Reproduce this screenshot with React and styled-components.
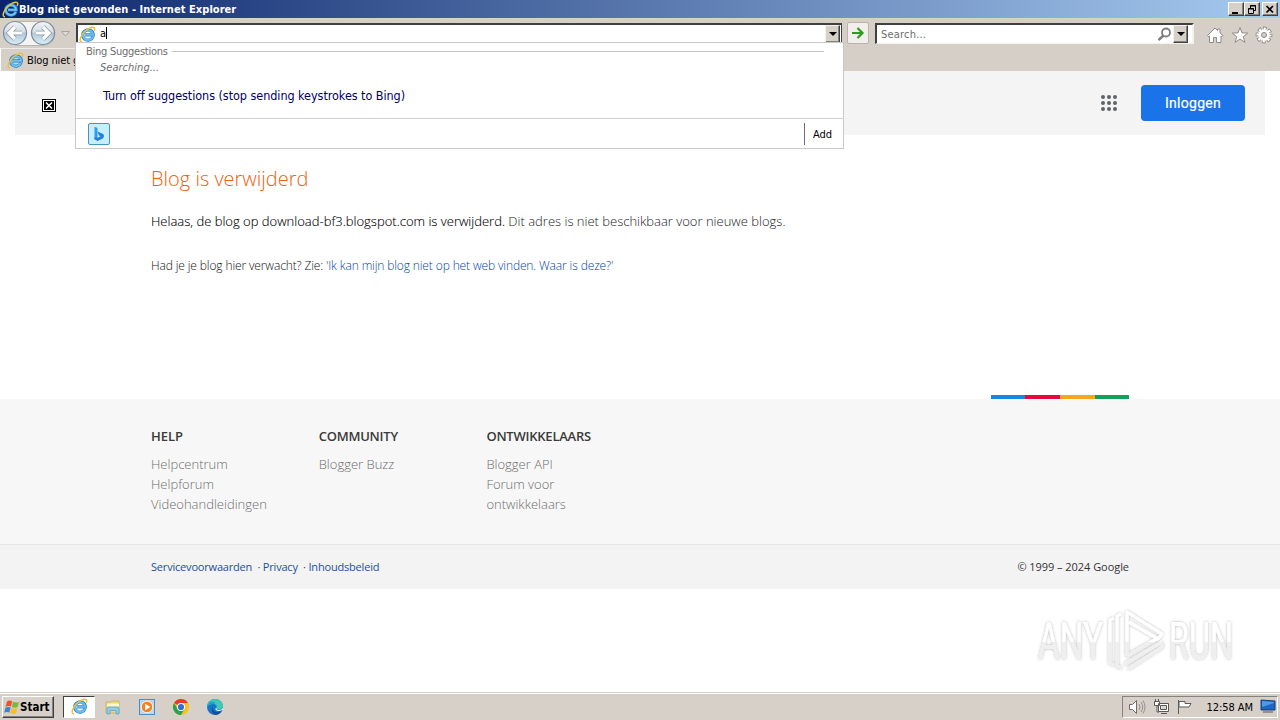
import React from 'react';
import styled, { createGlobalStyle } from 'styled-components';

const tahoma = '"DejaVu Sans Condensed", "DejaVu Sans", sans-serif';
const openSans = '"Open Sans", sans-serif';

const Global = createGlobalStyle`
  * { box-sizing: border-box; }
  html, body { margin: 0; padding: 0; background: #fff; overflow: hidden; }
  svg { display: block; flex: none; }
`;

const Screen = styled.div`
  position: relative;
  width: 1280px;
  height: 720px;
  display: flex;
  flex-direction: column;
  overflow: hidden;
  font: 11px ${tahoma};
  color: #000;
  white-space: nowrap;
`;

/* ---------- window chrome ---------- */
const TitleBar = styled.header`
  height: 18px;
  flex: none;
  display: flex;
  align-items: center;
  padding: 0 2px;
  background: linear-gradient(90deg, #0a246a, #a6caf0);
`;
const TitleText = styled.span`
  flex: 1;
  color: #fff;
  font-weight: bold;
  font-size: 11px;
  line-height: 18px;
  padding-top: 1px;
  letter-spacing: 0.05px;
`;
const WindowButtons = styled.div`
  display: flex;
`;
const WinButton = styled.button`
  width: 16px;
  height: 14px;
  padding: 0;
  margin-left: ${p => (p.$apart ? 2 : 0)}px;
  display: flex;
  align-items: center;
  justify-content: center;
  background: #d6d0c8;
  border: 1px solid;
  border-color: #fff #404040 #404040 #fff;
  box-shadow: inset -1px -1px #86827c;
`;
const Toolbar = styled.div`
  height: 30px;
  flex: none;
  display: flex;
  align-items: flex-start;
  background: #d6cfc8;
  border-top: 1px solid #d9d4c8;
  padding-left: 2px;
`;
const NavButtons = styled.div`
  width: 74px;
  height: 29px;
  display: flex;
`;
const AddressBox = styled.div`
  width: 766px;
  height: 21px;
  margin-top: 4px;
  display: flex;
  align-items: center;
  background: #fff;
  border: solid #404040;
  border-width: 2px 1px 0 2px;
  padding: 0 1px 1px;
`;
const Typed = styled.span`
  flex: 1;
  padding-left: 4px;
  font-size: 11px;
  line-height: 18px;
`;
const Caret = styled.i`
  display: inline-block;
  width: 1px;
  height: 12px;
  background: #000;
  vertical-align: -2px;
`;
const DropButton = styled.button`
  width: 15px;
  height: 18px;
  padding: 0;
  display: flex;
  align-items: center;
  justify-content: center;
  background: #d6d0c8;
  border: 1px solid;
  border-color: #f4f2ee #404040 #404040 #f4f2ee;
  box-shadow: inset -1px -1px #86827c;
`;
const GoButton = styled.button`
  width: 22px;
  height: 22px;
  margin: 3px 0 0 5px;
  padding: 0;
  display: flex;
  align-items: center;
  justify-content: center;
  background: #f1eeeb;
  border: 1px solid #b9b3ad;
  border-radius: 2px;
`;
const SearchBox = styled.div`
  width: 319px;
  height: 21px;
  margin: 4px 0 0 6px;
  display: flex;
  align-items: center;
  background: #fff;
  border: solid;
  border-width: 2px 2px 1px 2px;
  border-color: #404040 #f4f2ee #f4f2ee #404040;
  padding: 0 4px 0 4px;
`;
const SearchHint = styled.span`
  flex: 1;
  color: #6d6d6d;
  letter-spacing: 0.2px;
`;
const ToolIcons = styled.div`
  margin: 7px 0 0 12px;
  display: flex;
  gap: 6.5px;
`;
const TabStrip = styled.div`
  height: 23px;
  flex: none;
  background: #d6cfc8;
`;
const Tab = styled.div`
  height: 23px;
  width: 75px;
  overflow: hidden;
  display: flex;
  align-items: center;
  gap: 3px;
  padding-left: 6px;
  border-left: 1px solid #fff;
  border-top: 1px solid #efece8;
  letter-spacing: -0.12px;
`;

/* ---------- suggestion list ---------- */
const Suggestions = styled.section`
  position: absolute;
  left: 75px;
  top: 42px;
  width: 769px;
  height: 107px;
  display: flex;
  flex-direction: column;
  background: #fff;
  border: 1px solid #c9c9c9;
`;
const GroupTitle = styled.div`
  display: flex;
  align-items: center;
  gap: 4px;
  height: 16px;
  padding: 0 19px 0 10px;
  color: #6d6d6d;
  letter-spacing: -0.25px;
  &::after { content: ''; flex: 1; height: 1px; background: #c4c4c4; }
`;
const Searching = styled.div`
  height: 17px;
  line-height: 17px;
  padding-left: 24px;
  color: #6d6d6d;
  font-style: italic;
  letter-spacing: 0.02px;
`;
const TurnOff = styled.div`
  flex: 1;
  padding: 11px 0 0 27px;
  line-height: 17px;
  font-size: 12.5px;
  color: #000064;
  letter-spacing: -0.05px;
`;
const SuggestFooter = styled.div`
  height: 30px;
  display: flex;
  align-items: center;
  justify-content: space-between;
  padding: 0 0 0 12px;
  border-top: 1px solid #d0d0d0;
`;
const AddButton = styled.div`
  width: 39px;
  height: 22px;
  padding-left: 8px;
  line-height: 23px;
  border-left: 1px solid #6b6b6b;
`;

/* ---------- page ---------- */
const Page = styled.main`
  flex: 1;
  display: flex;
  flex-direction: column;
  background: #fff;
  font-family: ${openSans};
`;
const GoogleBar = styled.div`
  height: 64px;
  margin: 0 15px;
  padding: 0 20px 0 27px;
  display: flex;
  align-items: center;
  background: #f4f4f4;
`;
const BrokenImage = styled.div`
  width: 14px;
  height: 13px;
  margin: 4px auto 0 0;
  display: flex;
  align-items: center;
  justify-content: center;
  background: #000;
  border: 1px solid #000;
  box-shadow: inset 0 0 0 1px #fff;
`;
const LoginButton = styled.button`
  width: 104px;
  height: 36px;
  margin-left: 24px;
  padding: 0;
  border: 0;
  border-radius: 4px;
  background: #1a73e8;
  color: #fff;
  font: 400 14px/36px Roboto, sans-serif;
  letter-spacing: 0.3px;
  -webkit-text-stroke: 0.2px #fff;
`;
const Article = styled.article`
  height: 260px;
  padding: 30px 0 0 151px;
`;
const Heading = styled.h1`
  margin: 0;
  font-size: 20px;
  line-height: 28px;
  font-weight: 300;
  color: #f0600a;
`;
const Lead = styled.p`
  margin: 18px 0 0;
  font-size: 13px;
  line-height: 20px;
  font-weight: 300;
  color: #222;
  b { font-weight: 300; color: #000; -webkit-text-stroke: 0.1px #000; }
`;
const Note = styled.p`
  margin: 26px 0 0;
  font-size: 12px;
  line-height: 18px;
  font-weight: 300;
  color: #111;
  letter-spacing: -0.127px;
`;
const Link = styled.a`
  color: #003fa8;
`;
const ColorBar = styled.div`
  height: 4px;
  width: 138px;
  margin-left: 991px;
  background: linear-gradient(90deg, #1288e4 34px, #e4093a 34px 69px, #f9a51e 69px 104px, #12a05a 104px);
`;
const Links = styled.nav`
  height: 145px;
  padding: 27px 0 0 151px;
  display: flex;
  background: #f7f7f7;
`;
const Column = styled.ul`
  width: 167.7px;
  margin: 0;
  padding: 0;
  list-style: none;
  font-size: 13px;
  line-height: 20px;
  font-weight: 300;
  color: #6e6e6e;
`;
const ColumnTitle = styled.li`
  margin-bottom: 8px;
  font-weight: 600;
  color: #3a3a3a;
  letter-spacing: ${p => p.$ls || 0}px;
`;
const Legal = styled.footer`
  height: 45px;
  padding: 0 151px 2px;
  display: flex;
  align-items: center;
  justify-content: space-between;
  background: #f3f3f3;
  border-top: 1px solid #e6e6e6;
  font-size: 11px;
  font-weight: 400;
  color: #333;
`;
const LegalLinks = styled.div`
  color: #1c4fa0;
  white-space: pre;
  letter-spacing: -0.19px;
`;
const Copyright = styled.span`
  letter-spacing: -0.05px;
`;
const Watermark = styled.div`
  position: absolute;
  left: 1025px;
  top: 600px;
`;

/* ---------- taskbar ---------- */
const Taskbar = styled.div`
  height: 28px;
  flex: none;
  display: flex;
  align-items: center;
  background: #d6d0c8;
  border-top: 1px solid #d6d0c8;
  box-shadow: inset 0 1px #fff;
  padding: 0 2px;
`;
const StartButton = styled.button`
  width: 52px;
  height: 22px;
  padding: 0 0 0 1px;
  display: flex;
  align-items: center;
  background: #d6d0c8;
  border: 1px solid;
  border-color: #fff #404040 #404040 #fff;
  box-shadow: inset -1px -1px #86827c;
  font: bold 11.5px ${tahoma};
  color: #000;
`;
const TaskButton = styled.div`
  width: ${p => (p.$active ? 32 : 34)}px;
  height: 22px;
  margin-left: ${p => (p.$active ? 9 : 0)}px;
  display: flex;
  align-items: center;
  justify-content: center;
  background: ${p => (p.$active ? '#fff' : 'transparent')};
  border: ${p => (p.$active ? '1px solid' : '0')};
  border-color: #404040 #fff #fff #404040;
`;
const PinnedApps = styled.div`
  display: flex;
  padding-left: 1px;
`;
const Tray = styled.div`
  width: 156px;
  height: 22px;
  margin-left: auto;
  padding-left: 5px;
  display: flex;
  align-items: center;
  border: 1px solid;
  border-color: #86827c #fff #fff #86827c;
  gap: 6.5px;
`;
const Clock = styled.span`
  margin-left: 7px;
  padding-top: 1px;
  letter-spacing: -0.05px;
`;

const IEIcon = ({ size = 17 }) => (
  <svg width={size} height={size} viewBox="0 0 17 17" fill="none">
    <path d="M14 10.800A5.300 5.100 0 1 1 14.300 8.900H6" stroke="#2f83c4" strokeWidth="3.200" />
    <path d="M13.800 10.800A5.100 4.900 0 1 1 14.100 8.900H6" stroke="#6cc0f0" strokeWidth="1.900" />
    <path d="M3 16C-.8 15.800 1.500 8.500 8 3.500C11.800 .8 16 .2 15.800 3C15.700 3.800 15.500 4.300 15 5" stroke="#edc03a" strokeWidth="1.500" />
  </svg>
);
const Triangle = () => <svg width="8" height="4"><path d="M0 0h8L4 4z" fill="#000" /></svg>;

const NavIcon = () => (
  <svg width="74" height="29" viewBox="0 0 74 29">
    <defs>
      <linearGradient id="nb" x1="0" y1="0" x2="0" y2="1">
        <stop offset="0" stopColor="#f2f4f7" /><stop offset=".45" stopColor="#d5dde6" />
        <stop offset=".5" stopColor="#b5c6d6" /><stop offset="1" stopColor="#d5f0fb" />
      </linearGradient>
    </defs>
    <path d="M13 2.500h28a12 12 0 0 1 0 24H13" fill="#f4f4f4" stroke="#b8b5b2" />
    {[13, 41].map(x => (
      <g key={x} transform={`translate(${x} 14)`}>
        <circle r="11.500" fill="url(#nb)" stroke="#7f8b98" strokeWidth="1.200" />
        <path d={x === 13 ? 'M7 0H-5M0-6L-6 0L0 6' : 'M-7 0H5M0-6L6 0L0 6'} fill="none" stroke="#8998a9" strokeWidth="4.600" />
        <path d={x === 13 ? 'M7 0H-5M0-6L-6 0L0 6' : 'M-7 0H5M0-6L6 0L0 6'} fill="none" stroke="#fff" strokeWidth="3.200" />
      </g>
    ))}
    <path d="M59.500 12.500h8L63.500 17z" fill="#dfdad5" stroke="#aaa39e" />
  </svg>
);

const MinIcon = () => <svg width="12" height="11"><path d="M2 8h6v2H2z" /></svg>;
const RestoreIcon = () => (
  <svg width="12" height="11" fill="none" stroke="#000">
    <path d="M4.500 5V1.500h5v5H8M4 2h6M2.500 4.500h5v5h-5zM2 5h6" />
  </svg>
);
const CloseIcon = () => <svg width="12" height="11"><path d="M2.500 2l6.500 6.500M9 2L2.500 8.500" stroke="#000" strokeWidth="1.700" /></svg>;
const GoIcon = () => (
  <svg width="14" height="14"><path d="M1 7h10M6.500 2L11.500 7L6.500 12" fill="none" stroke="#2f9a22" strokeWidth="2.200" /></svg>
);
const MagnifierIcon = () => (
  <svg width="16" height="15" fill="none" stroke="#7d7b7d">
    <circle cx="9" cy="5.500" r="4" strokeWidth="1.800" /><path d="M6.500 8.500L1.500 13" strokeWidth="2.400" />
  </svg>
);
const HomeIcon = () => (
  <svg width="18" height="18" viewBox="0 0 18 18">
    <path d="M1.500 9.500L9 2l2.500 2.500V3h2.500v4l3 2.500-1 1.200-1-.7v6.500h-4.500v-5h-3v5H3.500V10l-.8.800z" fill="#fff" stroke="#918c88" />
  </svg>
);
const StarIcon = () => (
  <svg width="18" height="18" viewBox="0 0 18 18">
    <path d="M9 1.500l2 5.400 5.800.2-4.500 3.600 1.600 5.600L9 13.100l-4.900 3.200 1.600-5.600L1.200 7.100 7 6.900z" fill="#fff" stroke="#918c88" />
  </svg>
);
const GearIcon = () => (
  <svg width="18" height="18" viewBox="0 0 18 18">
    <circle cx="9" cy="9" r="6.400" fill="none" stroke="#918c88" strokeWidth="4" strokeDasharray="3.400 1.626" strokeDashoffset="1.700" />
    <circle cx="9" cy="9" r="6.200" fill="none" stroke="#fff" strokeWidth="2.600" strokeDasharray="2 2.869" strokeDashoffset="1" />
    <circle cx="9" cy="9" r="4.300" fill="#fff" stroke="#fff" strokeWidth="3" />
    <circle cx="9" cy="9" r="2.500" fill="#d6cfc8" stroke="#8b8683" />
  </svg>
);
const BingIcon = () => (
  <svg width="22" height="22">
    <rect x=".5" y=".5" width="21" height="21" rx="1.500" fill="#c6effb" stroke="#4394c4" />
    <path d="M6.500 3.800l3 1.200v9.500l-3 2z" fill="#2e9bea" />
    <path d="M6.500 14.500l3 .3 3-1.600-1.600-1-1.400-3.600 5 2.200c2.200 1 1.700 3.700.2 4.700L9.500 18l-3-1.800z" fill="#1f7fdf" />
  </svg>
);
const AppsIcon = () => (
  <svg width="16" height="16" fill="#5f6368">
    {[2, 8, 14].map(y => [2, 8, 14].map(x => <circle key={`${x}-${y}`} cx={x} cy={y} r="2" />))}
  </svg>
);

const AnyRunLogo = () => (
  <svg width="230" height="80" viewBox="0 0 230 80" overflow="visible">
    <defs>
      <linearGradient id="wm" x1="0" y1="0" x2="0" y2="80" gradientUnits="userSpaceOnUse">
        <stop offset=".52" stopColor="#fff" /><stop offset=".52" stopColor="#efefef" />
      </linearGradient>
      <filter id="sh" x="-10%" y="-20%" width="120%" height="140%">
        <feDropShadow dx="0" dy="0" stdDeviation="1.500" floodColor="#000" floodOpacity=".3" />
      </filter>
    </defs>
    <g fill="url(#wm)" filter="url(#sh)" fontFamily="Roboto, sans-serif" fontSize="51" fontWeight="400">
      <text x="13" y="59" textLength="65" lengthAdjust="spacingAndGlyphs">ANY</text>
      <text x="144" y="59" textLength="64" lengthAdjust="spacingAndGlyphs">RUN</text>
      <g fill="none" stroke="url(#wm)" strokeWidth="3.200" strokeLinejoin="round">
        <path d="M96 14l-4 2v50l5 2M89 18l-4 2v43l4 2" strokeWidth="3" />
        <path d="M102 56V12l35 22-4 5-29-17M102 56l31-18M100 64l37-22M103 69l34-22V43" />
      </g>
    </g>
  </svg>
);

const StartIcon = () => (
  <svg width="16" height="16" viewBox="0 0 16 16">
    <path d="M3 2.500q3-1.700 5.200-.2L7 7.500Q4.500 6.200 1.600 7.700z" fill="#e9552b" />
    <path d="M9 2.800q3 1.500 6 .1l-1.400 5.200q-2.800 1.300-5.700-.2z" fill="#79b83b" />
    <path d="M1.400 8.700q2.700-1.500 5.300-.2L5.400 13.500Q2.900 12.300.2 13.700z" fill="#3c84d0" />
    <path d="M7.600 8.900q2.800 1.500 5.700.2L12 14.200q-2.800 1.300-5.700-.2z" fill="#f6bf28" />
  </svg>
);
const FolderIcon = () => (
  <svg width="16" height="16">
    <path d="M1 3h5l1-1h7v12H1z" fill="#edd77c" stroke="#c8ab4c" strokeWidth=".7" /><path d="M2 4.500h12v3H2z" fill="#fdf6cf" />
    <path d="M2 15V9.500Q2 8 4 8h8q2 0 2 1.500V15h-3v-3.500H5V15z" fill="#91cbe9" stroke="#569fc5" strokeWidth=".7" />
  </svg>
);
const PlayerIcon = () => (
  <svg width="16" height="16">
    <rect x=".5" y=".5" width="15" height="15" fill="#b9d8f2" stroke="#4b8ccb" />
    <circle cx="8" cy="8" r="5.700" fill="#ef831c" stroke="#fff" strokeWidth=".8" /><path d="M6.200 4.800L11.500 8l-5.300 3.200z" fill="#fff" />
  </svg>
);
const ChromeIcon = () => (
  <svg width="16" height="16" viewBox="0 0 16 16">
    <circle cx="8" cy="8" r="8" fill="#fbc116" />
    <path d="M8 8L1.070 4A8 8 0 0 1 14.930 4H8z" fill="#e33b2e" />
    <path d="M8 8L4.540 10 1.070 4A8 8 0 0 0 8 16l3.460-6z" fill="#2da14c" />
    <circle cx="8" cy="8" r="4" fill="#fff" /><circle cx="8" cy="8" r="3.100" fill="#2f70d8" />
  </svg>
);
const EdgeIcon = () => (
  <svg width="16" height="16" viewBox="0 0 16 16">
    <circle cx="8" cy="8" r="8" fill="#1576c9" />
    <path d="M0 8C0 3 4 0 8 0s8 3 8 6.500c0 3-2.500 4-4.500 4S9 9.800 9.600 8.500C10.200 6.500 8.500 5 6 5S.8 6 0 8z" fill="#3fc8b3" />
    <path d="M0 8C1 3 5 2 8.200 3.500L7 5.200C3.500 4.500 1 6 0 8z" fill="#209cd0" />
    <path d="M6.500 6.500c-2.500 3 .5 7 4 6.500 2 0 3.500-.6 4.500-1.500-1 2-3 4-6 4.500-4-.5-6-5.500-2.500-9.500z" fill="#154d98" />
    <path d="M9.500 8.500c-.8 1.500.8 2.500 2.500 2.400 2 0 3.500-1 4-2.500v2.200c-1.500 1.300-4 1.900-6 1.100-2-.8-2-2.200-.5-3.200z" fill="#e6f2f5" />
  </svg>
);
const SpeakerIcon = () => (
  <svg width="18" height="16" fill="none" stroke="#6e6a67">
    <path d="M1.500 5.500h3L8.500 1.500v13L4.500 10.500h-3z" fill="#fff" /><path d="M11 5q2 3 0 6M13 3q3.500 5 0 10M15 1.500q4 6.500 0 13" stroke="#96918c" />
  </svg>
);
const NetworkIcon = () => (
  <svg width="17" height="16" fill="#fff" stroke="#5b5754">
    <path d="M5.500 4.500h10v8h-10zM8 14.500h6M1.500 2.500h5v4h-5zM2.500 0v2M5.500 0v2M4 7v6h2" /><path d="M7.500 6.500h6v4h-6z" fill="#dad6d2" />
  </svg>
);
const FlagIcon = () => (
  <svg width="17" height="16"><path d="M2.500 1v14M3 2.500h6v2h6l-2 3.500H8V8H3z" fill="#fff" stroke="#5f5b58" /></svg>
);
const DesktopIcon = () => (
  <svg width="16" height="15"><path d="M1 1l14 1v9H1z" fill="#1f66c0" stroke="#173d78" /><path d="M2 2l12 1v1L2 8z" fill="#4f9ae2" /><path d="M3 13h10" stroke="#56524e" /></svg>
);

export default function App() {
  return (
    <Screen>
      <Global />
      <TitleBar>
        <IEIcon />
        <TitleText>Blog niet gevonden - Internet Explorer</TitleText>
        <WindowButtons>
          <WinButton><MinIcon /></WinButton>
          <WinButton><RestoreIcon /></WinButton>
          <WinButton $apart><CloseIcon /></WinButton>
        </WindowButtons>
      </TitleBar>
      <Toolbar>
        <NavButtons><NavIcon /></NavButtons>
        <AddressBox>
          <IEIcon />
          <Typed>a<Caret /></Typed>
          <DropButton><Triangle /></DropButton>
        </AddressBox>
        <GoButton><GoIcon /></GoButton>
        <SearchBox>
          <SearchHint>Search...</SearchHint>
          <MagnifierIcon />
          <DropButton><Triangle /></DropButton>
        </SearchBox>
        <ToolIcons><HomeIcon /><StarIcon /><GearIcon /></ToolIcons>
      </Toolbar>
      <TabStrip>
        <Tab><IEIcon />Blog niet gevonden</Tab>
      </TabStrip>

      <Page>
        <GoogleBar>
          <BrokenImage>
            <svg width="8" height="7"><path d="M1 .5l6 6M7 .5l-6 6" stroke="#fff" strokeWidth="1.500" /></svg>
          </BrokenImage>
          <AppsIcon />
          <LoginButton>Inloggen</LoginButton>
        </GoogleBar>
        <Article>
          <Heading>Blog is verwijderd</Heading>
          <Lead><b>Helaas, de blog op download-bf3.blogspot.com is verwijderd.</b> Dit adres is niet beschikbaar voor nieuwe blogs.</Lead>
          <Note>Had je je blog hier verwacht? Zie: <Link>'Ik kan mijn blog niet op het web vinden. Waar is deze?'</Link></Note>
        </Article>
        <ColorBar />
        <Links>
          <Column>
            <ColumnTitle>HELP</ColumnTitle>
            <li>Helpcentrum</li><li>Helpforum</li><li>Videohandleidingen</li>
          </Column>
          <Column>
            <ColumnTitle $ls={-0.23}>COMMUNITY</ColumnTitle>
            <li>Blogger Buzz</li>
          </Column>
          <Column>
            <ColumnTitle $ls={-0.23}>ONTWIKKELAARS</ColumnTitle>
            <li>Blogger API</li><li>Forum voor</li><li>ontwikkelaars</li>
          </Column>
        </Links>
        <Legal>
          <LegalLinks>Servicevoorwaarden  · Privacy  · Inhoudsbeleid</LegalLinks>
          <Copyright>© 1999 – 2024 Google</Copyright>
        </Legal>
      </Page>

      <Taskbar>
        <StartButton><StartIcon />Start</StartButton>
        <TaskButton $active><IEIcon /></TaskButton>
        <PinnedApps>
          <TaskButton><FolderIcon /></TaskButton>
          <TaskButton><PlayerIcon /></TaskButton>
          <TaskButton><ChromeIcon /></TaskButton>
          <TaskButton><EdgeIcon /></TaskButton>
        </PinnedApps>
        <Tray>
          <SpeakerIcon /><NetworkIcon /><FlagIcon />
          <Clock>12:58 AM</Clock>
          <DesktopIcon />
        </Tray>
      </Taskbar>

      <Suggestions>
        <GroupTitle>Bing Suggestions</GroupTitle>
        <Searching>Searching...</Searching>
        <TurnOff>Turn off suggestions (stop sending keystrokes to Bing)</TurnOff>
        <SuggestFooter>
          <BingIcon />
          <AddButton>Add</AddButton>
        </SuggestFooter>
      </Suggestions>
      <Watermark><AnyRunLogo /></Watermark>
    </Screen>
  );
}
